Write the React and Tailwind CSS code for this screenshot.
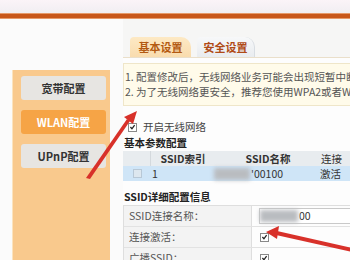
import React from 'react';

const font = { fontFamily: '"Noto Sans CJK SC", "Noto Sans", sans-serif' };

function Box({ checked, tone = 'plain' }) {
  return (
    <span
      className={`flex h-[9px] w-[9px] shrink-0 items-center justify-center border ${
        tone === 'blue' ? 'border-[#b8c8d6] bg-[#dde7ef]' : 'border-[#8a8a8a] bg-white'
      }`}
    >
      {checked && (
        <svg viewBox="0 0 10 10" className="h-[8px] w-[8px]">
          <path d="M2 5 L4.2 7.5 L8 2.2" fill="none" stroke="#222" strokeWidth="1.8" />
        </svg>
      )}
    </span>
  );
}

function Blur({ w }) {
  return <span className={`inline-block h-[12px] shrink-0 ${w} bg-[#b9bcc0] blur-[2px]`} />;
}

function SideBtn({ label, active }) {
  return (
    <div
      className={`flex h-[24px] items-center justify-center rounded-[3px] text-[11px] font-bold ${
        active ? 'bg-[#f6a446] text-white' : 'bg-[#e7e5e2] text-[#333]'
      }`}
    >
      {label}
    </div>
  );
}

export default function App() {
  return (
    <div className="relative h-[260px] w-[350px] overflow-hidden bg-[#f8f8f8]" style={font}>
      <div className="h-[13px] bg-gradient-to-b from-[#fbf4f8] to-[#f1eef2]" />
      <div className="h-[6px] border-y border-[#e59a6a] bg-[#c8571a]" />
      <div className="flex h-[241px]">
        <div className="w-[123px] shrink-0 bg-[#fbfbfb] pl-[12px] pr-[13px] pt-[51px]">
          <div className="flex h-full flex-col gap-[10px] border-l border-[#fbe3bf] bg-[#f9c98d] pl-[8px] pr-[4px] pt-[6px]">
            <SideBtn label="宽带配置" />
            <SideBtn label="WLAN配置" active />
            <SideBtn label="UPnP配置" />
          </div>
        </div>
        <div className="min-w-0 flex-1 overflow-hidden bg-[#fdfdfd]">
          <div className="flex h-[39px] items-end gap-[6px] border-b border-[#eadfca] bg-[#f6f6f5] pl-[7px]">
            <div className="flex h-[20px] w-[61px] items-center justify-center rounded-tl-[4px] rounded-tr-[10px] bg-gradient-to-b from-[#fde9c4] to-[#f9dcae] text-[11px] font-bold text-[#b35a12]">
              基本设置
            </div>
            <div className="flex h-[20px] w-[58px] items-center justify-center rounded-tl-[4px] rounded-tr-[10px] border-r border-[#d8dde2] bg-gradient-to-b from-[#f7f8f9] to-[#e9ecef] text-[11px] font-bold text-[#b04a16]">
              安全设置
            </div>
          </div>
          <div className="mt-[5px] h-[43px] overflow-hidden whitespace-nowrap border-y border-l border-[#efe6c9] bg-[#fffbea] pl-[1px] text-[10.5px] leading-[15px] text-[#555]">
            <div className="h-[5px]" />
            <div>1. 配置修改后，无线网络业务可能会出现短暂中断</div>
            <div>2. 为了无线网络更安全，推荐您使用WPA2或者WPA</div>
          </div>
          <div className="mt-[14px] flex h-[14px] items-center gap-[6px] pl-[5px] text-[10.5px] leading-[14px] text-[#444]">
            <Box checked />
            <span>开启无线网络</span>
          </div>
          <div className="mt-[2px] h-[14px] pl-[1px] text-[10.5px] font-bold leading-[14px] text-[#222]">基本参数配置</div>
          <div className="mt-[1px] flex h-[15px] items-center whitespace-nowrap bg-[#e8ecef] text-[10.5px] font-bold leading-[15px] text-[#333]">
            <span className="h-full w-[28px] shrink-0 border-r border-[#d4d9dd]" />
            <span className="w-[64px] shrink-0 text-center">SSID索引</span>
            <span className="w-[106px] shrink-0 text-center">SSID名称</span>
            <span className="font-normal">连接</span>
          </div>
          <div className="flex h-[15px] items-center whitespace-nowrap bg-[#cfe5f7] text-[10.5px] leading-[15px] text-[#333]">
            <span className="flex w-[28px] shrink-0 justify-center">
              <Box tone="blue" />
            </span>
            <span className="w-[63px] shrink-0 pl-[1px]">1</span>
            <Blur w="w-[36px]" />
            <span className="w-[70px] shrink-0 pl-[1px]">'00100</span>
            <span>激活</span>
          </div>
          <div className="mt-[9px] h-[14px] pl-[1px] text-[10.5px] font-bold leading-[14px] text-[#222]">SSID详细配置信息</div>
          <div className="mt-[1px] border-t border-l border-[#dedede] text-[10.5px] text-[#555]">
            <div className="flex h-[21px] border-b border-[#e2e2e2]">
              <div className="flex w-[128px] shrink-0 items-center border-r border-[#dedede] bg-[#f3f3f3] pl-[5px]">SSID连接名称：</div>
              <div className="flex flex-1 items-center pl-[7px]">
                <div className="flex h-[16px] flex-1 items-center border-y border-l border-[#c9c9c9] bg-white">
                  <Blur w="w-[38px]" />
                  <span className="pl-[1px] text-[#333]">00</span>
                </div>
              </div>
            </div>
            <div className="flex h-[21px] border-b border-[#e2e2e2]">
              <div className="flex w-[128px] shrink-0 items-center border-r border-[#dedede] bg-[#f3f3f3] pl-[5px]">连接激活：</div>
              <div className="flex flex-1 items-center pl-[8px]">
                <Box checked />
              </div>
            </div>
            <div className="flex h-[21px] border-b border-[#e2e2e2]">
              <div className="flex w-[128px] shrink-0 items-center border-r border-[#dedede] bg-[#f3f3f3] pl-[5px]">广播SSID：</div>
              <div className="flex flex-1 items-center pl-[8px]">
                <Box checked />
              </div>
            </div>
          </div>
        </div>
      </div>
      <svg className="pointer-events-none absolute left-0 top-0 h-[260px] w-[350px]" viewBox="0 0 350 260">
        <polygon points="86,178 90,179 130,121 127,119" fill="#d8312a" />
        <polygon points="137,111 124,117 133,124" fill="#d8312a" />
        <polygon points="352,248 352,252 276,235 277,231" fill="#d8312a" />
        <polygon points="266,232 279,226 277,239" fill="#d8312a" />
      </svg>
    </div>
  );
}
